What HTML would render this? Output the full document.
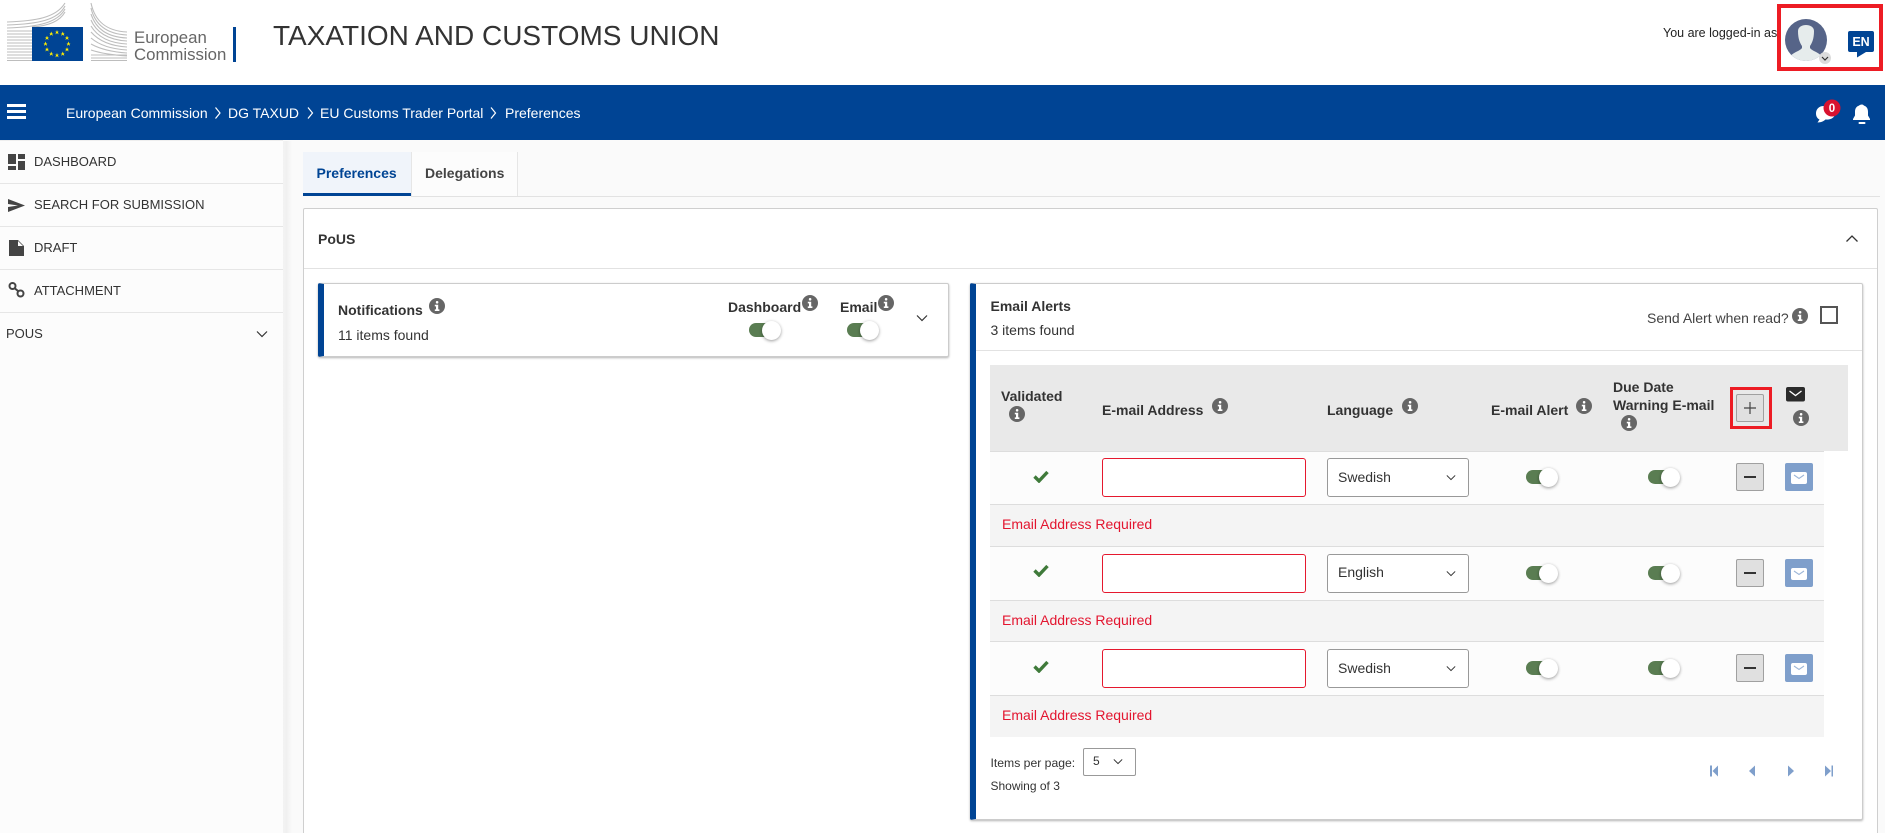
<!DOCTYPE html>
<html lang="en">
<head>
<meta charset="utf-8">
<title>Taxation and Customs Union</title>
<style>
html,body{margin:0;padding:0;width:1885px;height:833px;overflow:hidden;background:#fafafa;font-family:"Liberation Sans",Arial,sans-serif;color:#333}
#r{position:relative;width:1885px;height:833px;overflow:hidden}
.a{position:absolute;white-space:nowrap}
.t{position:absolute;white-space:nowrap;font-size:14px;line-height:18px}
.n{font-size:13px}
.b{font-weight:700}
.side{position:absolute;left:0;width:283px;height:1px;background:#e6e6e6}
.tog{position:absolute;width:31px;height:14px;border-radius:7px;background:#5a7d52}
.tog:after{content:"";position:absolute;left:13px;top:-2.5px;width:19px;height:19px;border-radius:50%;background:#fff;box-shadow:0 1px 3px rgba(0,0,0,.4)}
.inp{position:absolute;left:1102px;width:202px;height:37px;border:1px solid #e5182e;border-radius:3px;background:#fff}
.sel{position:absolute;left:1327px;width:140px;height:37px;border:1px solid #999;border-radius:3px;background:#fff}
.btn{position:absolute;left:1736px;width:26px;height:26px;border:1px solid #a0a0a0;border-radius:2px;background:#e0e0e0}
.mb{position:absolute;left:1785px;width:28px;height:28px;border-radius:2px;background:#7f9fcb}
.err{color:#e3152f}
svg{position:absolute;overflow:visible}
</style>
</head>
<body>
<div id="r">
<svg width="0" height="0" style="position:absolute">
<defs>
<symbol id="i" viewBox="0 0 16 16"><circle cx="8" cy="8" r="8" fill="#666"/><rect x="6.8" y="3" width="2.6" height="2.6" rx="1.2" fill="#fff"/><path d="M5.8 6.8H9.2V11.4H10.4V13H5.8V11.4H7V8.4H5.8Z" fill="#fff"/></symbol>
<symbol id="c" viewBox="0 0 12 8"><path d="M1 1.5L6 6.5L11 1.5" fill="none" stroke="#333" stroke-width="1.2"/></symbol>
<symbol id="s" viewBox="-2.6 -2.6 5.2 5.2"><path d="M0-2.6L.7-.8 2.5-.8 1-.4 1.6 1.9 0 .6-1.6 1.9-1-.4-2.5-.8-.7-.8Z" fill="#ffed00"/></symbol>
<symbol id="chk" viewBox="0 0 16 13"><path d="M1.5 6.5L6 11L14.5 2" fill="none" stroke="#3f7a3a" stroke-width="3.4"/></symbol>
</defs>
</svg>

<!-- header -->
<div class="a" style="left:0;top:0;width:1885px;height:85px;background:#fff"></div>
<svg style="left:0;top:0" width="240" height="70" viewBox="0 0 240 70">
<g fill="none" stroke="#bdbdbd" stroke-width="1.1">
<path d="M7 22C35 21 56 18 65 3M7 25C38 24 58 20 65 6M7 28C40 27 58 22 65 9M32 27C48 26 60 21 65 12"/>
<path d="M7 31H32M7 34H32M7 37H32M7 40H32M7 43H32M7 46H32M7 49H32M7 52H32M7 55H32M7 58H32M7 60.5H32"/>
<path d="M91 3C95 22 107 31 127 32M91 8C95 25 107 34 127 35M91 14C96 29 107 37 127 38M91 20C96 32 108 40 127 41M91 26C97 36 108 43 127 44M91 32C98 40 110 46 127 47M91 38C98 44 110 49 127 50M91 44C100 49 112 52 127 53M91 50C100 53 112 55 127 56M91 55H127M91 58H127M91 60.5H127"/>
</g>
<rect x="32" y="27" width="51" height="34" fill="#004494"/>
<g>
<use href="#s" x="54.500" y="30" width="5" height="5"/><use href="#s" x="60.250" y="31.500" width="5" height="5"/><use href="#s" x="64.500" y="35.700" width="5" height="5"/><use href="#s" x="66" y="41.500" width="5" height="5"/><use href="#s" x="64.500" y="47.200" width="5" height="5"/><use href="#s" x="60.250" y="51.500" width="5" height="5"/><use href="#s" x="54.500" y="53" width="5" height="5"/><use href="#s" x="48.750" y="51.500" width="5" height="5"/><use href="#s" x="44.500" y="47.200" width="5" height="5"/><use href="#s" x="43" y="41.500" width="5" height="5"/><use href="#s" x="44.500" y="35.700" width="5" height="5"/><use href="#s" x="48.750" y="31.500" width="5" height="5"/>
</g>
<rect x="233" y="27" width="3" height="35" fill="#004494"/>
</svg>
<div class="a" style="left:134px;top:28px;font-size:16.800px;line-height:20px;color:#666">European</div>
<div class="a" style="left:134px;top:45px;font-size:16.800px;line-height:20px;color:#666">Commission</div>
<div class="a" style="left:273px;top:18px;font-size:28px;line-height:36px;color:#333">TAXATION AND CUSTOMS UNION</div>
<div class="a" style="left:1663px;top:25px;font-size:12.5px;line-height:16px;color:#222">You are logged-in as</div>
<div class="a" style="left:1777px;top:4px;width:98px;height:59px;border:4px solid #ed1c24"></div>
<svg style="left:1785px;top:19px" width="60" height="50" viewBox="0 0 60 50">
<defs><clipPath id="av"><circle cx="21" cy="21" r="21"/></clipPath></defs>
<circle cx="21" cy="21" r="21" fill="#566488"/>
<g clip-path="url(#av)"><path d="M13 12C13 4 29 4 29 12C29 20 27 24 25 27V29C28 33 36 33 40 42H2C6 33 14 33 17 29V27C15 24 13 20 13 12Z" fill="#e6ecec"/></g>
<circle cx="40" cy="39" r="6" fill="#dcdcdc"/>
<path d="M37 38L40 41L43 38" fill="none" stroke="#333" stroke-width="1.2"/>
</svg>
<svg style="left:1848px;top:31px" width="26" height="27" viewBox="0 0 26 27">
<path d="M2 0H24Q26 0 26 2V19Q26 21 24 21H18L9 26.5V21H2Q0 21 0 19V2Q0 0 2 0Z" fill="#004494"/>
<text x="13" y="15" font-family="Liberation Sans,Arial,sans-serif" font-size="12.5" font-weight="700" fill="#fff" text-anchor="middle">EN</text>
</svg>

<!-- blue bar -->
<div class="a" style="left:0;top:85px;width:1885px;height:55px;background:#004494"></div>
<div class="a" style="left:7px;top:104px;width:19px;height:2.500px;background:#fff"></div>
<div class="a" style="left:7px;top:110px;width:19px;height:2.500px;background:#fff"></div>
<div class="a" style="left:7px;top:116px;width:19px;height:2.500px;background:#fff"></div>
<div class="t" style="left:66px;top:104px;color:#fff">European Commission</div>
<div class="t" style="left:228px;top:104px;color:#fff">DG TAXUD</div>
<div class="t" style="left:320px;top:104px;color:#fff">EU Customs Trader Portal</div>
<div class="t" style="left:505px;top:104px;color:#fff">Preferences</div>
<svg style="left:0;top:85px" width="520" height="55" viewBox="0 0 520 55">
<path d="M215.500 22.500L220 28L215.500 33.500M308 22.500L312.500 28L308 33.500M491 22.500L495.500 28L491 33.500" fill="none" stroke="#fff" stroke-width="1.2"/>
</svg>
<svg style="left:1815px;top:100px" width="60" height="30" viewBox="0 0 60 30">
<path d="M9 6C3 6 1 10 1 13.500C1 16.500 2.500 18.500 4.500 19.500L2.500 22.500C6 22.500 9 21 10.500 19.500C16 20 20 17.500 20 13.500C20 9.500 15 6 9 6Z" fill="#fff"/>
<circle cx="17" cy="8" r="8.500" fill="#d8122f"/>
<text x="17" y="12" font-family="Liberation Sans,Arial,sans-serif" font-size="11.5" font-weight="700" fill="#fff" text-anchor="middle">0</text>
<path d="M47 4.500C48 4.500 48.500 5 48.800 5.500C52 6.500 53 9 53 12V15.500L55 19V20H38V19L40 15.500V12C40 9 41 6.500 44.200 5.500C44.500 5 45.500 4.500 47 4.500Z" fill="#fff"/>
<rect x="43.500" y="22" width="7" height="2" rx="1" fill="#fff"/>
</svg>

<!-- sidebar -->
<div class="a" style="left:0;top:140px;width:283px;height:693px;background:#fcfcfc;border-top:1px solid #eee;box-sizing:border-box"></div>
<div class="a" style="left:283px;top:141px;width:9px;height:692px;background:linear-gradient(90deg,#f3f3f3,#f0f0f0 40%,#fafafa)"></div>
<div class="side" style="top:183px"></div>
<div class="side" style="top:226px"></div>
<div class="side" style="top:269px"></div>
<div class="side" style="top:312px"></div>
<svg style="left:0;top:140px" width="40" height="180" viewBox="0 0 40 180" fill="#444">
<path d="M8 14H16V24H8ZM18 14H25V19H18ZM8 26H16V30H8ZM18 21H25V30H18Z"/>
<path d="M8 59L25 65.500L8 72L8 67L18 65.500L8 64Z"/>
<path d="M9 100H18L24 106V116H9ZM18 101V106H23Z" fill-rule="evenodd"/>
<g fill="none" stroke="#444" stroke-width="2"><circle cx="12.500" cy="146" r="3"/><circle cx="20.500" cy="153.500" r="3"/><path d="M15 148.500L18 151"/></g>
</svg>
<div class="t n" style="left:34px;top:153px">DASHBOARD</div>
<div class="t n" style="left:34px;top:196px">SEARCH FOR SUBMISSION</div>
<div class="t n" style="left:34px;top:239px">DRAFT</div>
<div class="t n" style="left:34px;top:282px">ATTACHMENT</div>
<div class="t n" style="left:6px;top:325px">POUS</div>
<svg style="left:256px;top:330px" width="12" height="8"><use href="#c" width="12" height="8"/></svg>

<!-- tabs -->
<div class="a" style="left:303px;top:152px;width:108px;height:41px;background:#f0f4fa;border-bottom:3px solid #004494"></div>
<div class="a" style="left:411px;top:152px;width:107px;height:44px;background:#fcfcfc;border-left:1px solid #e6e6e6;border-right:1px solid #e6e6e6;box-sizing:border-box"></div>
<div class="a" style="left:411px;top:196px;width:1469px;height:1px;background:#e2e2e2"></div>
<div class="t b" style="left:316.500px;top:164px;color:#004494">Preferences</div>
<div class="t b" style="left:425px;top:164px;color:#444">Delegations</div>

<!-- main card -->
<div class="a" style="left:303px;top:208px;width:1575px;height:640px;background:#fff;border:1px solid #cfcfcf;box-sizing:border-box;border-radius:2px"></div>
<div class="a" style="left:304px;top:268px;width:1573px;height:1px;background:#e2e2e2"></div>
<div class="t b" style="left:318px;top:230px">PoUS</div>
<svg style="left:1845px;top:234px" width="14" height="9"><path d="M1.500 7.500L7 2L12.500 7.500" fill="none" stroke="#333" stroke-width="1.300"/></svg>

<!-- notifications card -->
<div class="a" style="left:318px;top:283px;width:631px;height:74px;background:#fff;border:1px solid #ccc;border-left:6px solid #004494;box-sizing:border-box;border-radius:2px;box-shadow:0 1px 2px rgba(0,0,0,.3)"></div>
<div class="t b" style="left:338px;top:301px">Notifications</div>
<svg style="left:429px;top:298px" width="16" height="16"><use href="#i" width="16" height="16"/></svg>
<div class="t" style="left:338px;top:326px">11 items found</div>
<div class="t b" style="left:728px;top:298px">Dashboard</div>
<svg style="left:802px;top:295px" width="16" height="16"><use href="#i" width="16" height="16"/></svg>
<div class="t b" style="left:840px;top:298px">Email</div>
<svg style="left:878px;top:295px" width="16" height="16"><use href="#i" width="16" height="16"/></svg>
<div class="tog" style="left:749px;top:323px"></div>
<div class="tog" style="left:847px;top:323px"></div>
<svg style="left:916px;top:314px" width="12" height="8"><use href="#c" width="12" height="8"/></svg>

<!-- email alerts card -->
<div class="a" style="left:970px;top:283px;width:893px;height:537px;background:#fff;border:1px solid #ccc;border-left:6px solid #004494;box-sizing:border-box;border-radius:2px;box-shadow:0 1px 2px rgba(0,0,0,.3)"></div>
<div class="a" style="left:976px;top:350px;width:886px;height:1px;background:#e2e2e2"></div>
<div class="t b" style="left:990.500px;top:297px">Email Alerts</div>
<div class="t" style="left:990.500px;top:321px">3 items found</div>
<div class="t" style="left:1647px;top:309px;color:#444">Send Alert when read?</div>
<svg style="left:1792px;top:308px" width="16" height="16"><use href="#i" width="16" height="16"/></svg>
<div class="a" style="left:1820px;top:306px;width:14px;height:14px;border:2px solid #555"></div>

<!-- table head -->
<div class="a" style="left:990px;top:365px;width:858px;height:86px;background:#e9e9e9"></div>
<div class="t b" style="left:1001px;top:387px">Validated</div>
<svg style="left:1009px;top:406px" width="16" height="16"><use href="#i" width="16" height="16"/></svg>
<div class="t b" style="left:1102px;top:401px">E-mail Address</div>
<svg style="left:1212px;top:398px" width="16" height="16"><use href="#i" width="16" height="16"/></svg>
<div class="t b" style="left:1327px;top:401px">Language</div>
<svg style="left:1402px;top:398px" width="16" height="16"><use href="#i" width="16" height="16"/></svg>
<div class="t b" style="left:1491px;top:401px">E-mail Alert</div>
<svg style="left:1576px;top:398px" width="16" height="16"><use href="#i" width="16" height="16"/></svg>
<div class="t b" style="left:1613px;top:378px">Due Date</div>
<div class="t b" style="left:1613px;top:396px">Warning E-mail</div>
<svg style="left:1621px;top:415px" width="16" height="16"><use href="#i" width="16" height="16"/></svg>
<div class="a" style="left:1730px;top:387px;width:36px;height:36px;border:3px solid #ed1c24"></div>
<div class="btn" style="top:394px"></div>
<svg style="left:1736px;top:394px" width="28" height="28"><path d="M14 8V20M8 14H20" stroke="#444" stroke-width="1.200"/></svg>
<svg style="left:1786px;top:387px" width="19" height="15"><rect width="19" height="14.500" rx="2" fill="#2b2b2b"/><path d="M3.500 4L9.500 8.500L15.500 4" fill="none" stroke="#fff" stroke-width="1.300"/></svg>
<svg style="left:1793px;top:410px" width="16" height="16"><use href="#i" width="16" height="16"/></svg>

<!-- row 1 -->
<div class="a" style="left:990px;top:451px;width:834px;height:53px;background:#fcfcfc;border-top:1px solid #ddd;box-sizing:border-box"></div>
<div class="a" style="left:990px;top:504px;width:834px;height:42px;background:#f4f4f4;border-top:1px solid #ddd;box-sizing:border-box"></div>
<svg style="left:1033px;top:470px" width="16" height="13"><use href="#chk" width="16" height="13"/></svg>
<div class="inp" style="top:458px"></div>
<div class="sel" style="top:458px"></div>
<div class="t" style="left:1338px;top:468px">Swedish</div>
<svg style="left:1446px;top:474px" width="10" height="7"><use href="#c" width="10" height="7"/></svg>
<div class="tog" style="left:1526px;top:470px"></div>
<div class="tog" style="left:1648px;top:470px"></div>
<div class="btn" style="top:463px"></div>
<div class="a" style="left:1744px;top:476px;width:12px;height:2px;background:#333"></div>
<div class="mb" style="top:463px"></div>
<svg style="left:1791px;top:472px" width="16" height="12"><rect width="16" height="12" rx="2" fill="#fff"/><path d="M3 3L8 6.500L13 3" fill="none" stroke="#9db6d8" stroke-width="1.100"/></svg>
<div class="t err" style="left:1002px;top:515px">Email Address Required</div>

<!-- row 2 -->
<div class="a" style="left:990px;top:546px;width:834px;height:54px;background:#fcfcfc;border-top:1px solid #ddd;box-sizing:border-box"></div>
<div class="a" style="left:990px;top:600px;width:834px;height:41px;background:#f4f4f4;border-top:1px solid #ddd;box-sizing:border-box"></div>
<svg style="left:1033px;top:564px" width="16" height="13"><use href="#chk" width="16" height="13"/></svg>
<div class="inp" style="top:554px"></div>
<div class="sel" style="top:554px"></div>
<div class="t" style="left:1338px;top:563px">English</div>
<svg style="left:1446px;top:570px" width="10" height="7"><use href="#c" width="10" height="7"/></svg>
<div class="tog" style="left:1526px;top:566px"></div>
<div class="tog" style="left:1648px;top:566px"></div>
<div class="btn" style="top:559px"></div>
<div class="a" style="left:1744px;top:572px;width:12px;height:2px;background:#333"></div>
<div class="mb" style="top:559px"></div>
<svg style="left:1791px;top:568px" width="16" height="12"><rect width="16" height="12" rx="2" fill="#fff"/><path d="M3 3L8 6.500L13 3" fill="none" stroke="#9db6d8" stroke-width="1.100"/></svg>
<div class="t err" style="left:1002px;top:611px">Email Address Required</div>

<!-- row 3 -->
<div class="a" style="left:990px;top:641px;width:834px;height:54px;background:#fcfcfc;border-top:1px solid #ddd;box-sizing:border-box"></div>
<div class="a" style="left:990px;top:695px;width:834px;height:42px;background:#f4f4f4;border-top:1px solid #ddd;box-sizing:border-box"></div>
<svg style="left:1033px;top:660px" width="16" height="13"><use href="#chk" width="16" height="13"/></svg>
<div class="inp" style="top:649px"></div>
<div class="sel" style="top:649px"></div>
<div class="t" style="left:1338px;top:659px">Swedish</div>
<svg style="left:1446px;top:665px" width="10" height="7"><use href="#c" width="10" height="7"/></svg>
<div class="tog" style="left:1526px;top:661px"></div>
<div class="tog" style="left:1648px;top:661px"></div>
<div class="btn" style="top:654px"></div>
<div class="a" style="left:1744px;top:667px;width:12px;height:2px;background:#333"></div>
<div class="mb" style="top:654px"></div>
<svg style="left:1791px;top:663px" width="16" height="12"><rect width="16" height="12" rx="2" fill="#fff"/><path d="M3 3L8 6.500L13 3" fill="none" stroke="#9db6d8" stroke-width="1.100"/></svg>
<div class="t err" style="left:1002px;top:706px">Email Address Required</div>

<!-- pagination -->
<div class="a" style="left:990.500px;top:755px;font-size:12.200px;line-height:16px">Items per page:</div>
<div class="a" style="left:1083px;top:748px;width:51px;height:26px;border:1px solid #999;border-radius:2px;background:#fff"></div>
<div class="a" style="left:1093px;top:753px;font-size:12px;line-height:16px">5</div>
<svg style="left:1113px;top:758px" width="10" height="7"><use href="#c" width="10" height="7"/></svg>
<div class="a" style="left:990.500px;top:778px;font-size:12px;line-height:16px">Showing of 3</div>
<svg style="left:1700px;top:760.500px" width="140" height="20" viewBox="0 0 140 20" fill="#7f9fcb">
<path d="M10 4.500H12V15.500H10ZM18 4.500V15.500L12.500 10Z"/>
<path d="M55 4.500V15.500L49 10Z"/>
<path d="M88 4.500V15.500L94 10Z"/>
<path d="M125 4.500L131 10L125 15.500ZM131.500 4.500H133V15.500H131.500Z"/>
</svg>
</div>
</body>
</html>
